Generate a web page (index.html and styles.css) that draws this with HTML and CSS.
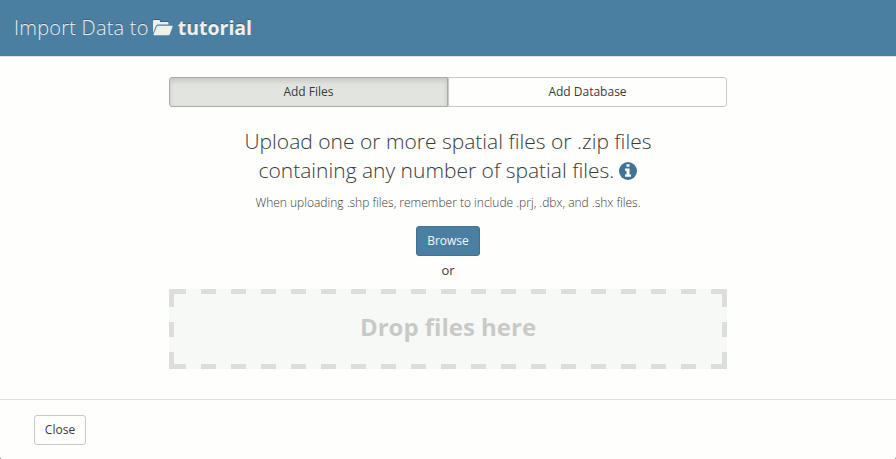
FILE: index.html
```
<!DOCTYPE html>
<html lang="en">
<head>
<meta charset="utf-8">
<title>Import Data</title>
<link rel="stylesheet" href="styles.css">
</head>
<body>
<div class="modal">
  <header class="modal-header">
    <h1 class="title"><span class="lead">Import Data to</span><svg class="folder" viewBox="0 0 20 16"><path class="folder-shade" d="M0 12V1.500L1 0h5.500L8 2h7.500V4H5L3 5z"/><path d="M0 13.500V2.200C0 1.400.6 1 1.200 1h4.600c.7 0 1.200.5 1.200 1.200V3h7.300c.7 0 1.200.5 1.200 1.200V5.500H5.300c-1 0-2 .7-2.400 1.600L0 14z"/><path d="M5.600 6.800h13.200c.7 0 1 .4.800 1l-2.800 7.400c-.3.600-.9 1-1.600 1H1.400c-.7 0-1-.4-.8-1L3.500 8c.3-.7 1.200-1.200 2.100-1.200z"/></svg><strong class="name">tutorial</strong></h1>
  </header>
  <main class="modal-body">
    <div class="tabs">
      <button class="tab tab-active">Add Files</button>
      <button class="tab">Add Database</button>
    </div>
    <h2 class="prompt"><span class="line">Upload one or more spatial files or .zip files</span><span class="line">containing any number of spatial files. <svg class="info" viewBox="0 0 18 18"><circle cx="9" cy="9" r="9"/><path d="M7.500 2.300h3v2.500h-3zM6 6.400h4.500v6H12v2.300H6v-2.300h1.500V8.700H6z"/></svg></span></h2>
    <p class="hint">When uploading .shp files, remember to include .prj, .dbx, and .shx files.</p>
    <button class="browse">Browse</button>
    <p class="or">or</p>
    <div class="dropzone">Drop files here</div>
  </main>
  <footer class="modal-footer">
    <button class="close">Close</button>
  </footer>
</div>
</body>
</html>
```
FILE: styles.css
```
* { box-sizing: border-box; }
body {
  margin: 0;
  background: #6b6d6b;
  color: #393b39;
  font-family: "Open Sans", sans-serif;
  font-size: 12px;
}
h1, h2, p { margin: 0; font-weight: 300; }
button {
  font: inherit;
  color: inherit;
  padding: 0;
  background: #fefefd;
  border: 1px solid #c7cac7;
  border-radius: 3px;
}
.modal {
  display: flex;
  flex-direction: column;
  height: 459px;
  background: #fefefd;
  border-radius: 0 0 2px 2px;
}
.modal-header {
  height: 57px;
  padding: 14px;
  background: #4a7fa2;
  border-bottom: 1px solid #dfe2df;
}
.title {
  display: flex;
  align-items: center;
  height: 28px;
  font-size: 19.5px;
  line-height: 28px;
  color: #eef0ec;
  text-shadow: 0 -1px 0 rgba(0, 0, 0, .25);
  white-space: nowrap;
}
.lead { font-size: 20px; letter-spacing: .22px; }
.folder { width: 20px; height: 16px; margin: 0 5px 2px 4px; fill: #eef0ec; overflow: visible; }
.folder-shade { fill: #386079; }
.name { font-weight: 700; }
.modal-body {
  display: flex;
  flex-direction: column;
  align-items: center;
  width: 558px;
  height: 342px;
  margin: 0 auto;
  padding-top: 20px;
}
.tabs { display: flex; width: 100%; height: 30px; }
.tab { flex: 1; line-height: 28px; }
.tab:last-child { border-radius: 0 3px 3px 0; }
.tab-active {
  flex: 0 0 279px;
  background: #e2e4e0;
  border-color: #a8aba8;
  border-radius: 3px 0 0 3px;
  box-shadow: inset 0 3px 5px rgba(0, 0, 0, .125);
}
.prompt { margin-top: 20px; font-size: 21px; line-height: 29px; text-align: center; }
.line { display: block; white-space: nowrap; }
.info { width: 18px; height: 18px; margin-left: -.3px; vertical-align: -1.500px; fill: #427294; }
.info path { fill: #fefefd; }
.hint { margin-top: 8px; line-height: 20px; }
.browse {
  width: 64px;
  height: 30px;
  margin-top: 13px;
  padding-bottom: 2px;
  color: #f5f8f8;
  background: #4a7fa2;
  border-color: #427294;
}
.or { margin-top: 4px; font-size: 13px; line-height: 20px; font-weight: 400; }
.dropzone {
  --dash: #dcdedc;
  width: 558px;
  height: 80px;
  margin-top: 9px;
  line-height: 75px;
  text-align: center;
  font-size: 24px;
  font-weight: 700;
  color: #c8cac8;
  background:
    linear-gradient(var(--dash) 0 0) 0 0 / 5px 5px no-repeat,
    linear-gradient(var(--dash) 0 0) 100% 0 / 5px 5px no-repeat,
    linear-gradient(var(--dash) 0 0) 0 100% / 5px 5px no-repeat,
    linear-gradient(var(--dash) 0 0) 100% 100% / 5px 5px no-repeat,
    linear-gradient(90deg, var(--dash) 50%, transparent 50%) 2px 0 / 30px 5px repeat-x,
    linear-gradient(90deg, var(--dash) 50%, transparent 50%) 2px 100% / 30px 5px repeat-x,
    linear-gradient(var(--dash) 50%, transparent 50%) 0 3px / 5px 30px repeat-y,
    linear-gradient(var(--dash) 50%, transparent 50%) 100% 3px / 5px 30px repeat-y,
    #f7f9f7;
}
.modal-footer {
  flex: 1;
  padding: 15px 34px;
  border-top: 1px solid #dfe0df;
}
.modal-header, .modal-body { flex: none; }
.close { width: 52px; height: 30px; padding-bottom: 2px; }
```
